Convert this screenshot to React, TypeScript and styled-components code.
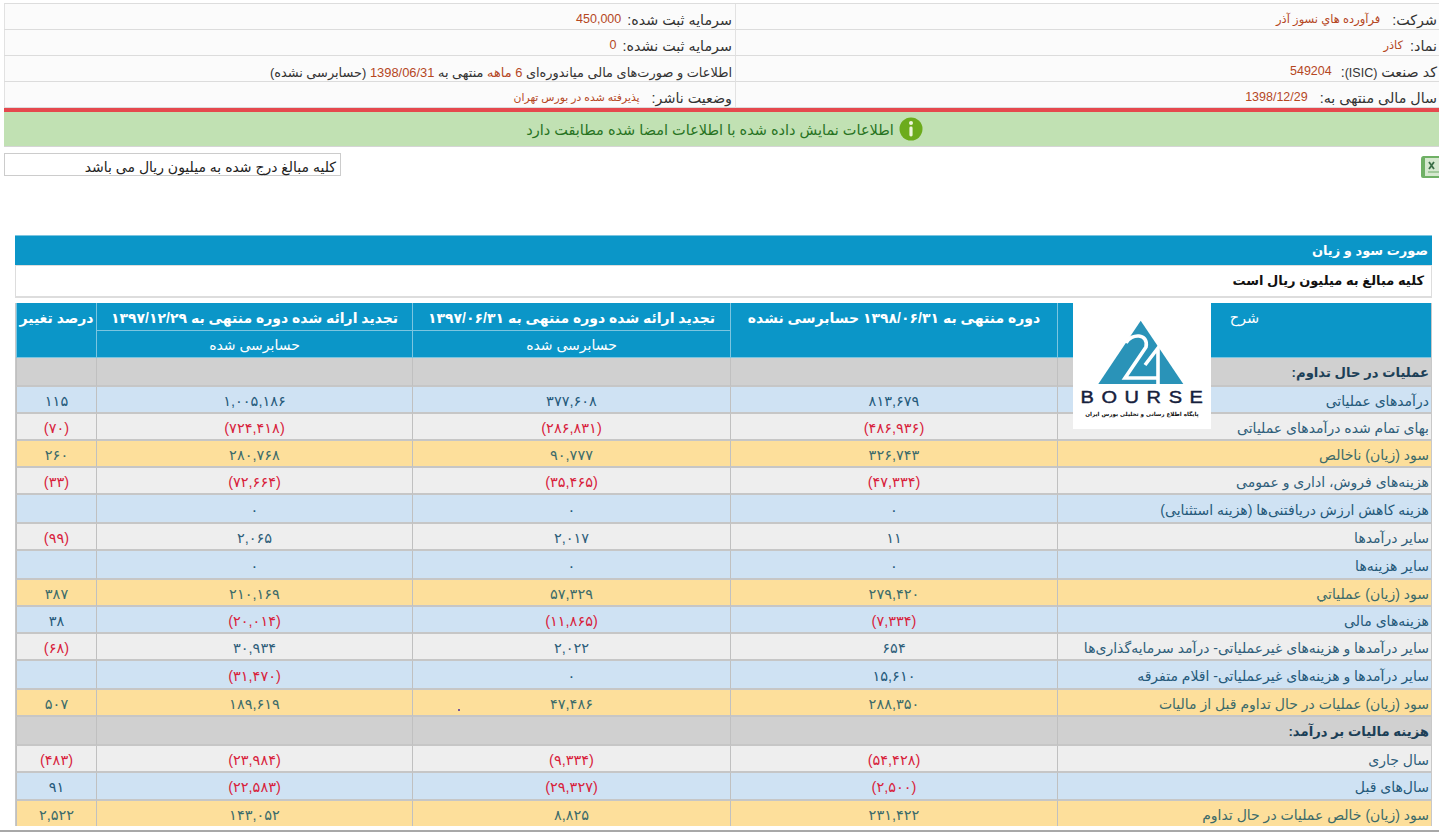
import React from 'react';
import styled, { createGlobalStyle } from 'styled-components';

const FONT = '"Liberation Sans", "DejaVu Sans", sans-serif';

const Global = createGlobalStyle`
  html, body { margin: 0; padding: 0; background: #fff; }
  body { font-family: ${FONT}; font-size: 12px; overflow: hidden; }
`;

const Page = styled.div`
  position: relative;
  width: 1439px;
  height: 833px;
  overflow: hidden;
  direction: rtl;
  display: flex;
  flex-direction: column;
  padding-top: 3px;
  box-sizing: border-box;
`;

const InfoGrid = styled.div`
  margin-left: 4px;
  display: grid;
  grid-template-columns: 703px 732px;
  border-top: 1px solid #ddd;
  border-left: 1px solid #e2e2e2;
  background: #fbfbfb;
`;

const InfoCell = styled.div<{ $wide?: boolean }>`
  height: 26px;
  box-sizing: border-box;
  padding: 7px ${p => (p.$wide ? 2 : 3)}px 0 0;
  border-bottom: 1px solid #dcdcdc;
  border-right: ${p => (p.$wide ? 'none' : '1px solid #e2e2e2')};
  color: #333;
  font-size: 14.3px;
  line-height: 19px;
  white-space: nowrap;
`;

const Value = styled.span<{ $size?: number; $gap?: number }>`
  color: #b5471f;
  font-size: ${p => p.$size ?? 12.5}px;
  margin-right: ${p => p.$gap ?? 8}px;
  position: relative;
  top: -2px;
`;

const InlineValue = styled.span`
  color: #b5471f;
`;

const Latin = styled.span`
  font-size: 12.5px;
`;

const Fine = styled.span`
  font-size: 12.9px;
`;

const Status = styled.div`
  margin-left: 4px;
  padding-left: 6px;
  height: 39px;
  box-sizing: border-box;
  border-top: 4px solid #e5484d;
  background: #c1e1b3;
  color: #27731f;
  font-size: 14.5px;
  display: flex;
  align-items: center;
  justify-content: center;
  gap: 5px;
  border-bottom: 1px solid #d5d5d5;
`;

const StatusText = styled.span`
  padding-top: 2px;
`;

const NoteRow = styled.div`
  display: flex;
  justify-content: space-between;
  align-items: flex-start;
  margin: 6px 0 0 4px;
  height: 82px;
`;

const ExcelWrap = styled.div`
  width: 19px;
  height: 24px;
  margin-top: 2px;
`;

const Note = styled.div`
  width: 337px;
  height: 23px;
  box-sizing: border-box;
  border: 1px solid #ccc;
  padding: 4px 4px 0 0;
  font-size: 14px;
  line-height: 18px;
  color: #222;
  white-space: nowrap;
`;

const Section = styled.section`
  margin: 0 7px 0 15px;
`;

const Title = styled.div`
  height: 30px;
  background: #0b96c8;
  color: #fff;
  font-weight: bold;
  font-size: 13px;
  line-height: 29px;
  padding-right: 4px;
  border-top: 1px solid #7cc5e0;
  box-sizing: border-box;
`;

const Sub = styled.div`
  height: 33px;
  box-sizing: border-box;
  background: #fff;
  color: #111;
  font-weight: bold;
  font-size: 13px;
  line-height: 30px;
  padding-right: 7px;
  border: 1px solid #ddd;
  border-bottom-width: 2px;
  margin-bottom: 5px;
`;

const Table = styled.table`
  width: 1417px;
  table-layout: fixed;
  border-collapse: separate;
  border-spacing: 0;
  border-right: 1px solid #c8c8c8;
  border-left: 1px solid #c8c8c8;
`;

const Head = styled.th<{ $h: number; $main?: boolean; $label?: boolean }>`
  height: ${p => p.$h}px;
  box-sizing: border-box;
  background: #0b96c8;
  color: #fff;
  font-weight: ${p => (p.$main ? 'bold' : 'normal')};
  font-size: ${p => (p.$label ? 14.5 : 14)}px;
  vertical-align: top;
  text-align: center;
  padding: ${p => (p.$main || p.$label ? 6 : 5)}px 0 0;
  border-left: 1px solid #7cc5e0;
  border-bottom: 1px solid #7cc5e0;
  white-space: nowrap;
  line-height: 19px;
`;

const TONES: Record<string, { bg: string; fg: string }> = {
  head: { bg: '#d0d0d0', fg: '#1c3f57' },
  blue: { bg: '#cfe2f3', fg: '#24597a' },
  grey: { bg: '#eeeeee', fg: '#2f5e7a' },
  gold: { bg: '#fddf9b', fg: '#3c6b6a' },
};

const Cell = styled.td<{ $tone: string; $h: number; $neg?: boolean; $last?: boolean }>`
  height: ${p => p.$h}px;
  box-sizing: border-box;
  background: ${p => TONES[p.$tone].bg};
  color: ${p => (p.$neg ? '#d8213b' : TONES[p.$tone].fg)};
  border-left: 1px solid #c0c0c0;
  border-bottom: ${p => (p.$last ? 'none' : '2px solid #c6c6c6')};
  text-align: center;
  font-size: 14.5px;
  padding: 2px 0 0;
  white-space: nowrap;
`;

const Desc = styled(Cell)<{ $bold?: boolean }>`
  text-align: right;
  padding-right: 2px;
  font-size: ${p => (p.$bold ? 13.2 : 14)}px;
  font-weight: ${p => (p.$bold ? 'bold' : 'normal')};
`;

const FooterLine = styled.div`
  position: absolute;
  left: 0;
  right: 0;
  top: 830px;
  height: 2px;
  background: #a8a8a8;
`;

const Dot = styled.span`
  position: absolute;
  left: 458px;
  top: 709px;
  width: 2px;
  height: 2px;
  border-radius: 50%;
  background: #4a2c9a;
`;

const Logo = styled.div`
  position: absolute;
  left: 1073px;
  top: 303px;
  width: 138px;
  height: 126px;
  background: #fff;
  display: flex;
  flex-direction: column;
  align-items: center;
`;

const LogoWord = styled.div`
  direction: ltr;
  font-family: "Liberation Sans", sans-serif;
  font-size: 20px;
  line-height: 17px;
  letter-spacing: 7.6px;
  margin-left: 7px;
  color: #16203c;
  margin-top: 2px;
  font-weight: normal;
  -webkit-text-stroke: 0.5px #16203c;
  transform: scaleY(0.85);
  white-space: nowrap;
`;

const LogoTag = styled.div`
  font-family: "DejaVu Sans", sans-serif;
  font-size: 5.6px;
  font-weight: bold;
  line-height: 10px;
  margin-top: 3px;
  color: #111;
  white-space: nowrap;
`;

type Row = { t: string; d: string; v?: string[]; h: number };

const rows: Row[] = [
  { t: 'head', d: 'عملیات در حال تداوم:', h: 29 },
  { t: 'blue', d: 'درآمدهای عملیاتی', v: ['۸۱۳,۶۷۹', '۳۷۷,۶۰۸', '۱,۰۰۵,۱۸۶', '۱۱۵'], h: 27 },
  { t: 'grey', d: 'بهای تمام شده درآمدهای عملیاتی', v: ['(۴۸۶,۹۳۶)', '(۲۸۶,۸۳۱)', '(۷۲۴,۴۱۸)', '(۷۰)'], h: 27 },
  { t: 'gold', d: 'سود (زیان) ناخالص', v: ['۳۲۶,۷۴۳', '۹۰,۷۷۷', '۲۸۰,۷۶۸', '۲۶۰'], h: 27 },
  { t: 'grey', d: 'هزینه‌های فروش، اداری و عمومی', v: ['(۴۷,۳۳۴)', '(۳۵,۴۶۵)', '(۷۲,۶۶۴)', '(۳۳)'], h: 27 },
  { t: 'blue', d: 'هزینه کاهش ارزش دریافتنی‌ها (هزینه استثنایی)', v: ['۰', '۰', '۰', ''], h: 29 },
  { t: 'grey', d: 'سایر درآمدها', v: ['۱۱', '۲,۰۱۷', '۲,۰۶۵', '(۹۹)'], h: 27 },
  { t: 'blue', d: 'سایر هزینه‌ها', v: ['۰', '۰', '۰', ''], h: 29 },
  { t: 'gold', d: 'سود (زیان) عملیاتي', v: ['۲۷۹,۴۲۰', '۵۷,۳۲۹', '۲۱۰,۱۶۹', '۳۸۷'], h: 27 },
  { t: 'blue', d: 'هزینه‌های مالی', v: ['(۷,۳۳۴)', '(۱۱,۸۶۵)', '(۲۰,۰۱۴)', '۳۸'], h: 27 },
  { t: 'grey', d: 'سایر درآمدها و هزینه‌های غیرعملیاتی- درآمد سرمایه‌گذاری‌ها', v: ['۶۵۴', '۲,۰۲۲', '۳۰,۹۳۴', '(۶۸)'], h: 27 },
  { t: 'blue', d: 'سایر درآمدها و هزینه‌های غیرعملیاتی- اقلام متفرقه', v: ['۱۵,۶۱۰', '۰', '(۳۱,۴۷۰)', ''], h: 29 },
  { t: 'gold', d: 'سود (زیان) عملیات در حال تداوم قبل از مالیات', v: ['۲۸۸,۳۵۰', '۴۷,۴۸۶', '۱۸۹,۶۱۹', '۵۰۷'], h: 27 },
  { t: 'head', d: 'هزینه مالیات بر درآمد:', h: 29 },
  { t: 'grey', d: 'سال جاری', v: ['(۵۴,۴۲۸)', '(۹,۳۳۴)', '(۲۳,۹۸۴)', '(۴۸۳)'], h: 27 },
  { t: 'blue', d: 'سال‌های قبل', v: ['(۲,۵۰۰)', '(۲۹,۳۲۷)', '(۲۲,۵۸۳)', '۹۱'], h: 28 },
  { t: 'gold', d: 'سود (زیان) خالص عملیات در حال تداوم', v: ['۲۳۱,۴۲۲', '۸,۸۲۵', '۱۴۳,۰۵۲', '۲,۵۲۲'], h: 25 },
];

const InfoIcon = () => (
  <svg width="24" height="24" viewBox="0 0 24 24">
    <circle cx="12" cy="12" r="11.5" fill="#6cab1c" />
    <circle cx="12" cy="6" r="2" fill="#eef6dc" />
    <rect x="10.4" y="9.5" width="3.2" height="10" rx="1.4" fill="#eef6dc" />
  </svg>
);

const ExcelIcon = () => (
  <svg width="19" height="24" viewBox="0 0 19 24">
    <path d="M3 1h16v22H3a2 2 0 0 1-2-2V4a3 3 0 0 1 2-3z" fill="#6fb065" />
    <path d="M5 3h14v18H5z" fill="#d5e8cf" />
    <path d="M9 7l5 7M14 7l-5 7" stroke="#3c6f48" strokeWidth="1.8" />
    <path d="M8 17h11" stroke="#8fbf8a" strokeWidth="1.5" />
  </svg>
);

const LogoMark = () => (
  <svg width="138" height="84" viewBox="0 0 138 84">
    <path d="M67.7 17.7L110.3 81H25.3z" fill="#2a93b8" />
    <path d="M53 40C58 30 76 30 73 44L52 75H84" fill="none" stroke="#fff" strokeWidth="3.6" />
    <path d="M72 62L85 45V81" fill="none" stroke="#fff" strokeWidth="3.6" />
  </svg>
);

const isNeg = (s: string) => s.startsWith('(');

export default function App() {
  return (
    <Page>
      <Global />
      <InfoGrid>
        <InfoCell $wide>شرکت: <Value $size={11.5}>فرآورده هاي نسوز آذر</Value></InfoCell>
        <InfoCell>سرمایه ثبت شده: <Value $gap={2}>450,000</Value></InfoCell>
        <InfoCell $wide>نماد: <Value $size={11.5} $gap={3}>کاذر</Value></InfoCell>
        <InfoCell>سرمایه ثبت نشده: <Value $gap={2}>0</Value></InfoCell>
        <InfoCell $wide>کد صنعت <Latin>(ISIC)</Latin>: <Value $gap={5}>549204</Value></InfoCell>
        <InfoCell><Fine>اطلاعات و صورت‌های مالی میاندوره‌ای <InlineValue>6 ماهه</InlineValue> منتهی به <InlineValue>1398/06/31</InlineValue> (حسابرسی نشده)</Fine></InfoCell>
        <InfoCell $wide>سال مالی منتهی به: <Value>1398/12/29</Value></InfoCell>
        <InfoCell>وضعیت ناشر: <Value $size={10.8}>پذیرفته شده در بورس تهران</Value></InfoCell>
      </InfoGrid>
      <Status>
        <InfoIcon />
        <StatusText>اطلاعات نمایش داده شده با اطلاعات امضا شده مطابقت دارد</StatusText>
      </Status>
      <NoteRow>
        <ExcelWrap><ExcelIcon /></ExcelWrap>
        <Note>کلیه مبالغ درج شده به میلیون ریال می باشد</Note>
      </NoteRow>
      <Section>
        <Title>صورت سود و زیان</Title>
        <Sub>کلیه مبالغ به میلیون ریال است</Sub>
        <Table>
          <colgroup>
            <col style={{ width: 374 }} />
            <col style={{ width: 327 }} />
            <col style={{ width: 318 }} />
            <col style={{ width: 316 }} />
            <col style={{ width: 80 }} />
          </colgroup>
          <thead>
            <tr>
              <Head $h={28} $label rowSpan={2}>شرح</Head>
              <Head $h={28} $main rowSpan={2}>دوره منتهی به ۱۳۹۸/۰۶/۳۱ حسابرسی نشده</Head>
              <Head $h={28} $main>تجدید ارائه شده دوره منتهی به ۱۳۹۷/۰۶/۳۱</Head>
              <Head $h={28} $main>تجدید ارائه شده دوره منتهی به ۱۳۹۷/۱۲/۲۹</Head>
              <Head $h={28} $main rowSpan={2}>درصد تغییر</Head>
            </tr>
            <tr>
              <Head $h={27}>حسابرسی شده</Head>
              <Head $h={27}>حسابرسی شده</Head>
            </tr>
          </thead>
          <tbody>
            {rows.map((r, i) => (
              <tr key={i}>
                <Desc $tone={r.t} $h={r.h} $bold={r.t === 'head'} $last={i === rows.length - 1}>{r.d}</Desc>
                {(r.v ?? ['', '', '', '']).map((v, j) => (
                  <Cell key={j} $tone={r.t} $h={r.h} $neg={isNeg(v)} $last={i === rows.length - 1}>{v}</Cell>
                ))}
              </tr>
            ))}
          </tbody>
        </Table>
      </Section>
      <Logo>
        <LogoMark />
        <LogoWord>BOURSE</LogoWord>
        <LogoTag>پایگاه اطلاع رسانی و تحلیلی بورس ایران</LogoTag>
      </Logo>
      <Dot />
      <FooterLine />
    </Page>
  );
}
